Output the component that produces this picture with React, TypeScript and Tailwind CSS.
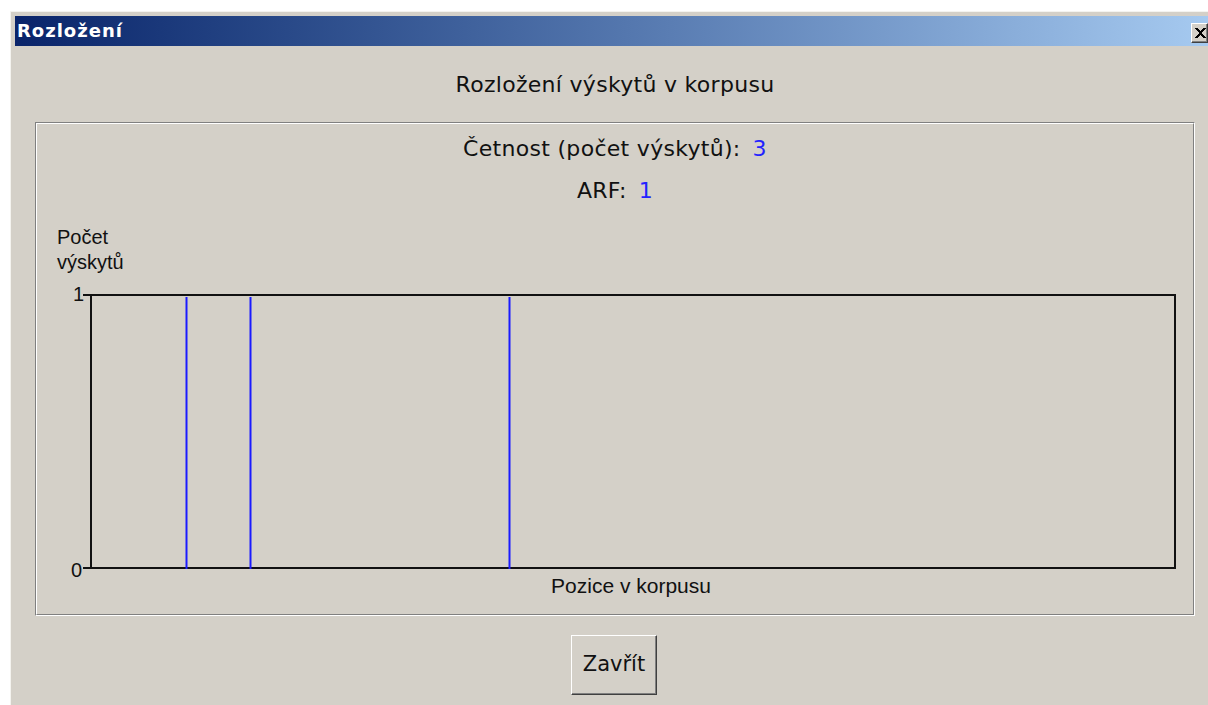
import React from 'react';

// positions of occurrences along the corpus, 0..1
const hits = [0.0875, 0.1465, 0.3855];

const dlgFont = "font-['DejaVu_Sans',Verdana,sans-serif]";
const chartFont = "font-['Liberation_Sans',Arial,sans-serif]";

function TitleBar() {
  return (
    <div className="flex h-[30px] items-center justify-between bg-gradient-to-r from-[#0a246a] to-[#a6caf0] pl-[2px]">
      <span className="font-['DejaVu_Sans',sans-serif] text-[18px] font-bold leading-none tracking-[1px] text-white">
        Rozložení
      </span>
      <button className="mt-[3px] flex h-[20px] w-[17px] items-center justify-center border-t border-l border-white border-r border-b border-r-[#404040] border-b-[#404040] bg-[#d4d0c8] pl-[1px] shadow-[inset_-1px_-1px_0_#808080]">
        <svg width="11" height="10" viewBox="0 0 11 10">
          <path d="M0 0h3v1h1v1h1v1h1V2h1V1h1V0h3v1h-1v1H9v1H8v1H7v2h1v1h1v1h1v1h1v1H8V9H7V8H6V7H5v1H4v1H3v1H0V9h1V8h1V7h1V6h1V4H3V3H2V2H1V1H0z" fill="#000" />
        </svg>
      </button>
    </div>
  );
}

function Chart() {
  const w = 1086;
  const h = 276;
  return (
    <div className="flex flex-col">
      <div className={`ml-[20px] flex flex-col ${chartFont} text-[20px] leading-[25px] text-[#111]`}>
        <span>Počet</span>
        <span>výskytů</span>
      </div>
      <div className="mt-[19px] flex">
        <div className={`flex w-[54px] flex-col justify-between ${chartFont} text-[20px] leading-none text-[#111]`}>
          <span className="-mt-[10px] ml-[36px]">1</span>
          <span className="-mb-[10px] ml-[34px]">0</span>
        </div>
        <svg width={w + 8} height={h} className="-ml-[8px]">
          <line x1="0" y1="1" x2="8" y2="1" stroke="#111" strokeWidth="2" />
          <line x1="0" y1={h - 2} x2="8" y2={h - 2} stroke="#111" strokeWidth="2" />
          <rect x="8" y="1" width={w - 2} height={h - 3} fill="none" stroke="#111" strokeWidth="2" />
          {hits.map((p) => {
            const x = Math.round(8 + p * (w - 2)) + 0.5;
            return <line key={p} x1={x} y1="3" x2={x} y2={h - 1} stroke="#1a1aff" strokeWidth="2" />;
          })}
        </svg>
      </div>
      <div className={`mt-[4px] flex justify-center pl-[32px] ${chartFont} text-[21px] leading-[24px] text-[#111]`}>
        Pozice v korpusu
      </div>
    </div>
  );
}

export default function App() {
  return (
    <div className="h-[705px] w-[1208px] overflow-hidden bg-white pl-[10px] pt-[11px]">
      <div className="h-full border-l border-t border-[#f4f3ef] bg-[#d4d0c8] pl-[4px] pt-[4px]">
        <TitleBar />
        <div className={`flex flex-col ${dlgFont} text-[#111]`}>
          <div className="ml-[20px] flex h-[76px] w-[1160px] items-center justify-center text-[22px] tracking-[0.3px]">
            Rozložení výskytů v korpusu
          </div>
          <div className="ml-[20px] w-[1160px] border border-t-[#808080] border-l-[#808080] border-r-white border-b-white">
            <div className="h-[492px] border border-t-white border-l-white border-r-[#808080] border-b-[#808080]">
              <div className="flex flex-col items-center pt-[12px] text-[22px] leading-[26px] tracking-[0.3px]">
                <div>
                  Četnost (počet výskytů):<span className="ml-[12px] text-[#2323ff]">3</span>
                </div>
                <div className="mt-[16px]">
                  ARF:<span className="ml-[12px] text-[#2323ff]">1</span>
                </div>
              </div>
              <div className="mt-[21px]">
                <Chart />
              </div>
            </div>
          </div>
          <div className="mt-[19px] flex w-[1198px] justify-center">
            <button className="h-[60px] w-[86px] border border-t-white border-l-white border-r-[#404040] border-b-[#404040] bg-[#d4d0c8] text-[21px] shadow-[inset_-1px_-1px_0_#808080]">
              Zavřít
            </button>
          </div>
        </div>
      </div>
    </div>
  );
}
